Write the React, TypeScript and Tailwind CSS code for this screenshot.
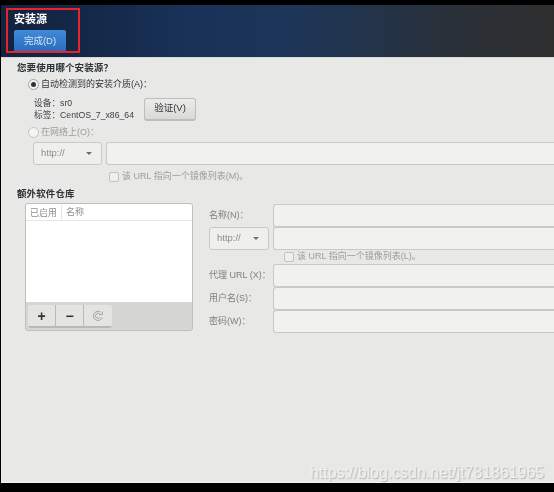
const CJK = "font-['Liberation_Sans','Noto_Sans_CJK_SC',sans-serif]";

function Radio({ checked, disabled }: { checked?: boolean; disabled?: boolean }) {
  return (
    <span
      className={`flex h-[11px] w-[11px] shrink-0 items-center justify-center rounded-full border bg-[#f4f4f3] ${
        disabled ? "border-[#c4c4c2]" : "border-[#a3a3a0]"
      }`}
    >
      {checked && <span className="h-[5px] w-[5px] rounded-full bg-[#2e3436]" />}
    </span>
  );
}

function Checkbox() {
  return <span className="h-[10px] w-[10px] shrink-0 rounded-[2px] border border-[#c2c2c0] bg-[#efefee]" />;
}

function UrlSelect({ className }: { className: string }) {
  return (
    <div
      className={`flex items-center justify-between rounded-[3px] border border-[#c9c9c7] bg-[#efefee] pl-[7px] pr-[9px] text-[9.5px] text-[#8d8f8b] ${className}`}
    >
      <span>http://</span>
      <span className="h-0 w-0 border-x-[3.5px] border-t-[3.5px] border-x-transparent border-t-[#6f716d]" />
    </div>
  );
}

function Field({ className = "" }: { className?: string }) {
  return <div className={`h-[23px] rounded-l-[3px] border-y border-l border-[#c9c9c7] bg-[#f1f1f0] ${className}`} />;
}

function RepoField({ label }: { label: string }) {
  return (
    <div className="flex items-center">
      <span className="w-[64px] shrink-0 text-[9px] text-[#7f817d]">{label}</span>
      <Field className="flex-1" />
    </div>
  );
}

function ToolButton({ children, className = "" }: { children: React.ReactNode; className?: string }) {
  return (
    <div
      className={`flex h-[23px] w-[28px] items-center justify-center border-b-2 border-r border-[#b9b9b6] bg-[#e4e4e1] text-[#2e3436] ${className}`}
    >
      {children}
    </div>
  );
}

export default function App() {
  return (
    <div className={`relative flex h-[492px] w-[554px] flex-col overflow-hidden bg-black pl-px pt-[5px] ${CJK}`}>
      <header className="h-[52px] shrink-0 bg-[linear-gradient(90deg,#13233f_0%,#14294a_18%,#193157_32%,#1d3558_52%,#22344c_65%,#2a3038_82%,#2e2e2e_100%)] pl-[13px] pt-[6px] blur-[0.3px]">
        <h1 className="text-[11px] font-bold leading-[16px] text-white">安装源</h1>
        <button className="mt-[2px] h-[22px] w-[52px] rounded-[2px] bg-[linear-gradient(180deg,#408ad8,#2a6cbd)] text-[9.5px] text-[#d4e3f4]">
          完成(D)
        </button>
      </header>

      <main className="flex h-[425px] shrink-0 flex-col border-t border-[#d8d8d6] bg-[#e8e8e6] text-[#2e3436] blur-[0.3px]">
        <div className="mt-[3px] pl-[16px] text-[9.5px] font-bold leading-[14px] tracking-[0.1px]">您要使用哪个安装源？</div>

        <div className="mt-[1px] flex h-[16px] items-center gap-[2px] pl-[27px] text-[9px]">
          <Radio checked />
          <span className="pt-px">自动检测到的安装介质(A)：</span>
        </div>

        <div className="mt-[5px] flex h-[24px] items-center pl-[33px]">
          <div className="w-[110px] text-[8.7px] leading-[12px] text-[#3d4144]">
            <div>设备：sr0</div>
            <div>标签：CentOS_7_x86_64</div>
          </div>
          <button className="h-[23px] w-[52px] rounded-[3px] border border-b-2 border-[#bdbdba] bg-[linear-gradient(180deg,#ececea,#d9d9d6)] text-[9.5px] text-[#2e3436]">
            验证(V)
          </button>
        </div>

        <div className="mt-[3px] flex h-[16px] items-center gap-[2px] pl-[27px] text-[9px] text-[#9c9e9a]">
          <Radio disabled />
          <span className="pt-px">在网络上(O)：</span>
        </div>

        <div className="mt-[2px] flex h-[23px] items-stretch pl-[32px]">
          <UrlSelect className="w-[69px]" />
          <Field className="ml-[4px] flex-1" />
        </div>

        <div className="mt-[6px] flex h-[12px] items-center gap-[3px] pl-[108px] text-[9px] text-[#9c9e9a]">
          <Checkbox />
          <span>该 URL 指向一个镜像列表(M)。</span>
        </div>

        <div className="mt-[4px] pl-[16px] text-[9.5px] font-bold leading-[14px] tracking-[0.1px]">额外软件仓库</div>

        <div className="mt-[2px] flex pl-[24px]">
          <div className="h-[128px] w-[168px] shrink-0 overflow-hidden rounded-[3px] border border-[#bfbfbc] bg-[#d6d6d3]">
            <div className="h-[98px] bg-white">
              <div className="flex h-[17px] items-center border-b border-[#e6e6e4] pt-px text-[9px] text-[#8d8f8b]">
                <span className="w-[36px] border-r border-[#e6e6e4] pl-[4px] leading-[16px]">已启用</span>
                <span className="pl-[4px]">名称</span>
              </div>
            </div>
            <div className="flex pl-[2px] pt-[3px]">
              <div className="flex overflow-hidden rounded-[3px]">
                <ToolButton>
                  <span className="text-[14px] font-bold leading-none">+</span>
                </ToolButton>
                <ToolButton>
                  <span className="text-[14px] font-bold leading-none">−</span>
                </ToolButton>
                <ToolButton className="border-r-0">
                  <svg width="12" height="12" viewBox="0 0 12 12" fill="none" stroke="#a3a5a1" strokeWidth="1">
                    <path d="M10.4 7.4A4.6 4.6 0 1 1 8.6 2" />
                    <path d="M8.2 7A2.5 2.5 0 1 1 7.6 3.8" />
                    <path d="M7 4.6H10.4V1.6" />
                  </svg>
                </ToolButton>
              </div>
            </div>
          </div>

          <div className="ml-[16px] flex min-w-0 flex-1 flex-col">
            <div className="mt-[1px]">
              <RepoField label="名称(N)：" />
            </div>
            <div className="flex items-stretch">
              <UrlSelect className="w-[60px]" />
              <Field className="ml-[4px] flex-1" />
            </div>
            <div className="flex h-[14px] items-center gap-[3px] pl-[75px] text-[9px] text-[#9c9e9a]">
              <Checkbox />
              <span>该 URL 指向一个镜像列表(L)。</span>
            </div>
            <RepoField label="代理 URL (X)：" />
            <RepoField label="用户名(S)：" />
            <RepoField label="密码(W)：" />
          </div>
        </div>
      </main>

      <div className="h-px shrink-0 bg-[#f2f2f2]" />

      {/* annotation + watermark sit on top of the screenshot */}
      <div className="absolute left-[6px] top-[8px] h-[45px] w-[74px] border-2 border-[#e8242b]" />
      <div className="absolute left-[310px] top-[464px] text-[15.9px] leading-[18px] text-[#f1f1f0] [text-shadow:1px_1px_1px_#b4b4b2]">
        https://blog.csdn.net/jt781861965
      </div>
    </div>
  );
}
